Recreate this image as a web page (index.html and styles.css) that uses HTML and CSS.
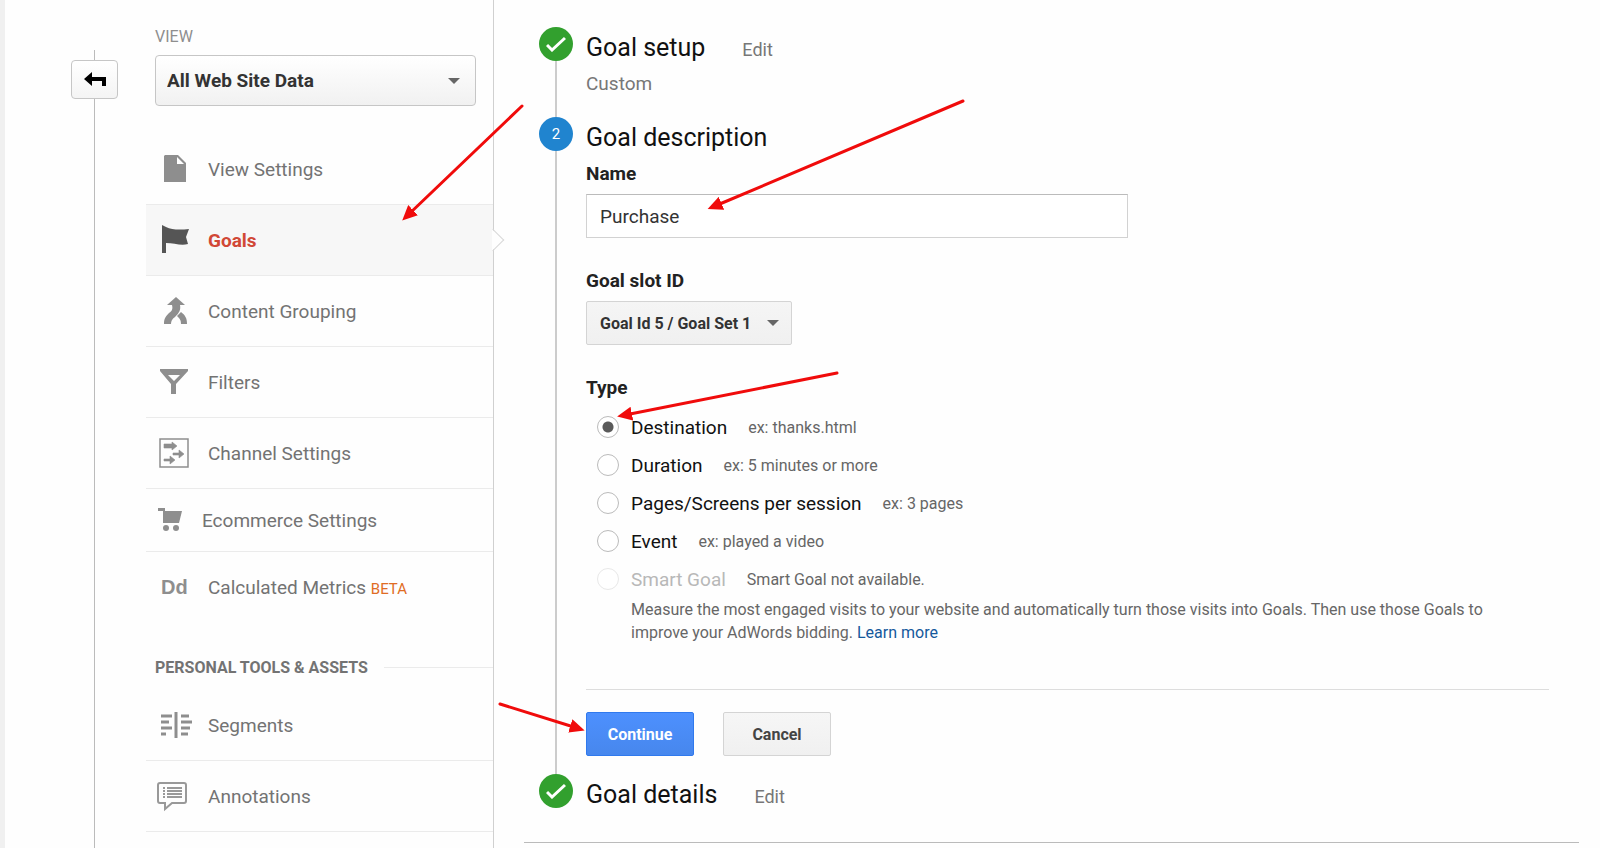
FILE: index.html
```html
<!DOCTYPE html>
<html lang="en">
<head>
    <meta charset="UTF-8">
    <meta name="viewport" content="width=device-width, initial-scale=1.0">
    <title>Goals</title>
    <link rel="stylesheet" href="styles.css">
</head>
<body>
    <div class="page">
        <div class="rail">
            <div class="rail-stub"></div>
            <button class="back-button" aria-label="Back">
                <svg width="22" height="16" viewBox="0 0 22 16"><path d="M0 7 8 0v5h14v9h-4V9H8v5z" fill="#000"/></svg>
            </button>
            <div class="rail-line"></div>
        </div>

        <div class="sidebar">
            <label class="view-label" for="view">VIEW</label>
            <div class="select-box view-box">
                <select id="view" class="view-select">
                    <option>All Web Site Data</option>
                </select>
            </div>

            <nav class="menu">
                <a href="#" class="menu-item">
                    <svg class="icon" width="32" height="32" viewBox="0 0 32 32"><path d="M7 2h13l8 8v19H6V3z" fill="#8e8e8e"/><path d="M19 4v7h7z" fill="#fff"/></svg>
                    <span>View Settings</span>
                </a>
                <a href="#" class="menu-item active">
                    <svg class="icon" width="32" height="32" viewBox="0 0 32 32"><path d="M4 1l4 2c6 3 14 3 23 2l-3 8 2 7c-7 2-14-1-22-1v10H4z" fill="#555"/></svg>
                    <span>Goals</span>
                </a>
                <a href="#" class="menu-item">
                    <svg class="icon" width="32" height="32" viewBox="0 0 32 32"><path d="M18 2l9 8h-5c1 5-1 8-5 12-3 2-4 4-4 7H6c0-5 1-7 5-11 3-2 4-4 3-8H9z" fill="#8e8e8e"/><path d="M23 17c4 3 6 6 6 12h-6c0-4-1-5-4-8z" fill="#8e8e8e"/></svg>
                    <span>Content Grouping</span>
                </a>
                <a href="#" class="menu-item">
                    <svg class="icon" width="32" height="32" viewBox="0 0 32 32"><path fill-rule="evenodd" d="M2 3h28v2L18 18v10h-5V18L2 5zM10 9l6 6 6-6z" fill="#8e8e8e"/></svg>
                    <span>Filters</span>
                </a>
                <a href="#" class="menu-item">
                    <svg class="icon" width="32" height="32" viewBox="0 0 32 32"><path d="M2 2h28v28H2z" fill="none" stroke="#8e8e8e" stroke-width="1.5"/><path d="M6 7h8V5l5 4-5 4v-2H6zM15 16h6v-3l5 4-5 4v-3h-6zM6 22h6v-3l5 4-5 4v-3H6z" fill="#8e8e8e" stroke="#8e8e8e" stroke-width=".6"/></svg>
                    <span>Channel Settings</span>
                </a>
                <a href="#" class="menu-item compact">
                    <svg class="icon" width="28" height="28" viewBox="0 0 28 28"><path d="M0 2h7v3h17l-3 12H5V5H0z" fill="#8e8e8e"/><circle cx="8" cy="22" r="3" fill="#8e8e8e"/><circle cx="18" cy="22" r="3" fill="#8e8e8e"/></svg>
                    <span>Ecommerce Settings</span>
                </a>
                <a href="#" class="menu-item last">
                    <span class="icon dd">Dd</span>
                    <span>Calculated Metrics <small class="beta">BETA</small></span>
                </a>
            </nav>

            <h2 class="section-title"><span>PERSONAL TOOLS &amp; ASSETS</span></h2>
            <nav class="menu">
                <a href="#" class="menu-item">
                    <svg class="icon" width="32" height="32" viewBox="0 0 32 32"><path d="M3 7h11M3 13h8M3 19h11M3 25h5M23 7h8M23 13h11M23 19h9M23 25h7M18 3v26" fill="none" stroke="#8e8e8e" stroke-width="3"/></svg>
                    <span>Segments</span>
                </a>
                <a href="#" class="menu-item">
                    <svg class="icon" width="32" height="32" viewBox="0 0 32 32"><path d="M2 3h24q2 0 2 2v16q0 2-2 2H14l-7 6v-6H2q-2 0-2-2V5q0-2 2-2z" fill="none" stroke="#999" stroke-width="2"/><path d="M5 8h2M9 8h15M5 11h2M9 11h15M5 14h2M9 14h15M5 17h2M9 17h15" stroke="#999" stroke-width="2"/></svg>
                    <span>Annotations</span>
                </a>
            </nav>
        </div>

        <div class="main">
            <div class="step">
                <div class="marker">
                    <div class="circle done"><svg width="20" height="16" viewBox="0 0 20 16"><path d="M1 9l5 5L19 2" fill="none" stroke="#fff" stroke-width="3"/></svg></div>
                    <div class="marker-line"></div>
                </div>
                <div class="step-body setup">
                    <div class="step-head">
                        <h1>Goal setup</h1>
                        <a href="#" class="edit">Edit</a>
                    </div>
                    <div class="summary">Custom</div>
                </div>
            </div>

            <div class="step">
                <div class="marker">
                    <div class="circle current">2</div>
                    <div class="marker-line"></div>
                </div>
                <form class="step-body">
                    <div class="step-head">
                        <h1>Goal description</h1>
                    </div>
                    <label class="field-label" for="name">Name</label>
                    <input type="text" id="name" class="name-input" value="Purchase">

                    <label class="field-label" for="slot">Goal slot ID</label>
                    <div class="select-box slot-box">
                        <select id="slot" class="slot-select">
                            <option>Goal Id 5 / Goal Set 1</option>
                        </select>
                    </div>

                    <div class="field-label">Type</div>
                    <div class="types">
                        <div class="type">
                            <input type="radio" name="type" id="destination" checked>
                            <label for="destination">Destination</label>
                            <span class="hint">ex: thanks.html</span>
                        </div>
                        <div class="type">
                            <input type="radio" name="type" id="duration">
                            <label for="duration">Duration</label>
                            <span class="hint">ex: 5 minutes or more</span>
                        </div>
                        <div class="type">
                            <input type="radio" name="type" id="pages">
                            <label for="pages">Pages/Screens per session</label>
                            <span class="hint">ex: 3 pages</span>
                        </div>
                        <div class="type">
                            <input type="radio" name="type" id="event">
                            <label for="event">Event</label>
                            <span class="hint">ex: played a video</span>
                        </div>
                        <div class="type disabled">
                            <input type="radio" name="type" id="smart" disabled>
                            <label for="smart">Smart Goal</label>
                            <span class="hint">Smart Goal not available.</span>
                        </div>
                        <p class="smart-text">Measure the most engaged visits to your website and automatically turn those visits into Goals. Then use those Goals to improve your AdWords bidding. <a href="#">Learn more</a></p>
                    </div>

                    <div class="buttons">
                        <button type="button" class="btn btn-primary">Continue</button>
                        <button type="button" class="btn">Cancel</button>
                    </div>
                </form>
            </div>

            <div class="step last-step">
                <div class="marker">
                    <div class="circle done"><svg width="20" height="16" viewBox="0 0 20 16"><path d="M1 9l5 5L19 2" fill="none" stroke="#fff" stroke-width="3"/></svg></div>
                </div>
                <div class="step-body">
                    <div class="step-head">
                        <h1>Goal details</h1>
                        <a href="#" class="edit">Edit</a>
                    </div>
                </div>
            </div>
        </div>

        <!-- Red pointer arrows -->
        <svg class="arrows" width="1000" height="760" viewBox="0 0 1000 760">
            <defs>
                <marker id="head" markerUnits="userSpaceOnUse" markerWidth="15" markerHeight="14" refX="7" refY="7" orient="auto">
                    <path d="M0 0 15 7 0 14z" fill="#f00b0b"/>
                </marker>
            </defs>
            <path class="arrow" d="M522 106 408 215"/>
            <path class="arrow" d="M963 101 715 206"/>
            <path class="arrow" d="M837 373 625 415"/>
            <path class="arrow" d="M500 704 577 728"/>
        </svg>
    </div>
</body>
</html>
```
FILE: styles.css
```css
* {
    box-sizing: border-box;
}
body {
    margin: 0;
    font-family: Roboto, Arial, sans-serif;
    font-size: 19px;
    color: #222;
    background-color: #fefefe;
}
a {
    color: inherit;
    text-decoration: none;
}
.page {
    position: relative;
    display: flex;
    min-height: 100vh;
    border-left: 5px solid #f0f0f0;
}

/* Left rail */
.rail {
    display: flex;
    flex-direction: column;
    align-items: center;
    padding: 50px 28px 0 66px;
}
.rail-stub {
    width: 1px;
    height: 10px;
    background-color: #bbb;
}
.rail-line {
    flex: 1;
    width: 1px;
    background-color: #bbb;
}
.back-button {
    display: flex;
    align-items: center;
    justify-content: center;
    width: 47px;
    height: 39px;
    padding: 0;
    border: 1px solid #c6c6c6;
    border-radius: 4px;
    background: linear-gradient(#fff, #f4f4f4);
}

/* Sidebar */
.sidebar {
    width: 348px;
    flex-shrink: 0;
    padding-top: 27px;
    border-right: 1px solid #d0d0d0;
}
.view-label {
    display: block;
    height: 28px;
    padding-left: 9px;
    font-size: 16px;
    line-height: 20px;
    color: #8e8e8e;
}
.select-box {
    position: relative;
}
.select-box::after {
    content: "";
    position: absolute;
    right: 13px;
    top: 50%;
    margin-top: -3px;
    border: 6px solid transparent;
    border-top-color: #666;
    border-bottom: 0;
    pointer-events: none;
}
select {
    appearance: none;
    width: 100%;
    border: 1px solid #c6c6c6;
    font-family: inherit;
    font-weight: bold;
    color: #333;
}
.view-box {
    margin: 0 17px 28px 9px;
}
.view-box::after {
    right: 16px;
}
.view-select {
    height: 51px;
    padding: 0 11px;
    border-radius: 4px;
    font-size: 19px;
    background: linear-gradient(#fff, #f1f1f1);
}
.menu-item {
    position: relative;
    display: flex;
    align-items: center;
    gap: 18px;
    height: 71px;
    padding-left: 12px;
    border-bottom: 1px solid #ebebeb;
    color: #737373;
}
.icon {
    flex-shrink: 0;
    overflow: visible;
}
.menu-item.active {
    background-color: #f7f7f7;
    font-weight: bold;
    color: #d14836;
}
.menu-item.active::after {
    content: "";
    position: absolute;
    right: -8px;
    top: 27px;
    width: 15px;
    height: 15px;
    border: 1px solid #d8d8d8;
    border-left: 0;
    border-bottom: 0;
    background: linear-gradient(45deg, #f7f7f7 50%, #fefefe 50%);
    transform: rotate(45deg);
}
.menu-item.compact {
    gap: 16px;
    height: 63px;
}
.menu-item.last {
    border-bottom: 0;
}
.dd {
    width: 32px;
    padding-left: 3px;
    font-family: "Liberation Sans", Arial, sans-serif;
    font-size: 20px;
    font-weight: bold;
    color: #8e8e8e;
}
.beta {
    font-size: 15px;
    color: #e06c24;
}
.section-title {
    display: flex;
    align-items: center;
    gap: 16px;
    height: 20px;
    margin: 34px 0 13px;
    padding-left: 9px;
    font-size: 16px;
    color: #737373;
}
.section-title::after {
    content: "";
    flex: 1;
    height: 1px;
    background-color: #ebebeb;
}

/* Goal steps */
.main {
    flex: 1;
    padding: 27px 21px 0 30px;
}
.step {
    display: flex;
    gap: 13px;
    padding-left: 15px;
}
.marker {
    display: flex;
    flex-direction: column;
    align-items: center;
}
.marker-line {
    flex: 1;
    width: 2px;
    background-color: #ccc;
}
.circle {
    display: flex;
    align-items: center;
    justify-content: center;
    width: 34px;
    height: 34px;
    border-radius: 50%;
    font-size: 15px;
    color: #fff;
}
.done {
    background-color: #32a02e;
}
.current {
    background-color: #2084cf;
}
.step-body {
    flex: 1;
    padding-right: 30px;
}
.setup {
    height: 90px;
}
.step-head {
    display: flex;
    align-items: baseline;
    gap: 37px;
    height: 40px;
}
h1 {
    margin: 0;
    font-size: 25px;
    font-weight: normal;
    line-height: 42px;
    color: #111;
}
.edit {
    font-size: 18px;
    color: #777;
}
.summary {
    line-height: 34px;
    color: #777;
}
.field-label {
    display: block;
    height: 37px;
    line-height: 34px;
    font-weight: bold;
}
.name-input {
    display: block;
    width: 100%;
    max-width: 542px;
    height: 44px;
    margin-bottom: 26px;
    padding: 0 13px;
    border: 1px solid #d2d2d2;
    border-top-color: #bbb;
    font-family: inherit;
    font-size: 19px;
    color: #333;
    background-color: #fff;
}
.slot-box {
    width: 206px;
    margin-bottom: 26px;
}
.slot-select {
    height: 44px;
    padding: 0 13px;
    border-color: #d4d4d4;
    border-radius: 2px;
    font-size: 16px;
    background: linear-gradient(#f5f5f5, #f0f0f0);
}
.types {
    padding: 0 0 45px 11px;
    border-bottom: 1px solid #ddd;
}
.type {
    display: flex;
    align-items: center;
    height: 38px;
    color: #111;
}
.type input {
    appearance: none;
    width: 22px;
    height: 22px;
    margin: 0 12px 0 0;
    border: 1px solid #bbb;
    border-radius: 50%;
    background-color: #fff;
}
.type input:checked {
    background: radial-gradient(circle, #5a5a5a 5px, #fff 6px);
}
.hint {
    margin-left: 21px;
    font-size: 16px;
    color: #666;
}
.disabled label {
    color: #b8b8b8;
}
.type input:disabled {
    border-color: #e8e8e8;
}
.smart-text {
    margin: 0 30px 0 34px;
    font-size: 16px;
    line-height: 23px;
    color: #666;
}
.smart-text a {
    color: #15599c;
}
.buttons {
    display: flex;
    gap: 29px;
    padding: 22px 0 18px;
}
.btn {
    width: 108px;
    height: 44px;
    padding: 0;
    border: 1px solid #d4d4d4;
    border-radius: 2px;
    font-family: inherit;
    font-size: 16px;
    font-weight: bold;
    color: #444;
    background: linear-gradient(#f6f6f6, #f0f0f0);
}
.btn-primary {
    border-color: #3079ed;
    color: #fff;
    background: linear-gradient(#4d90fe, #4787ed);
}
.last-step {
    padding-bottom: 28px;
    border-bottom: 1px solid #bbb;
}

.arrows {
    position: absolute;
    left: -5px;
    top: 0;
    pointer-events: none;
}
.arrow {
    fill: none;
    stroke: #f00b0b;
    stroke-width: 3;
    stroke-linecap: round;
    marker-end: url(#head);
}
```
